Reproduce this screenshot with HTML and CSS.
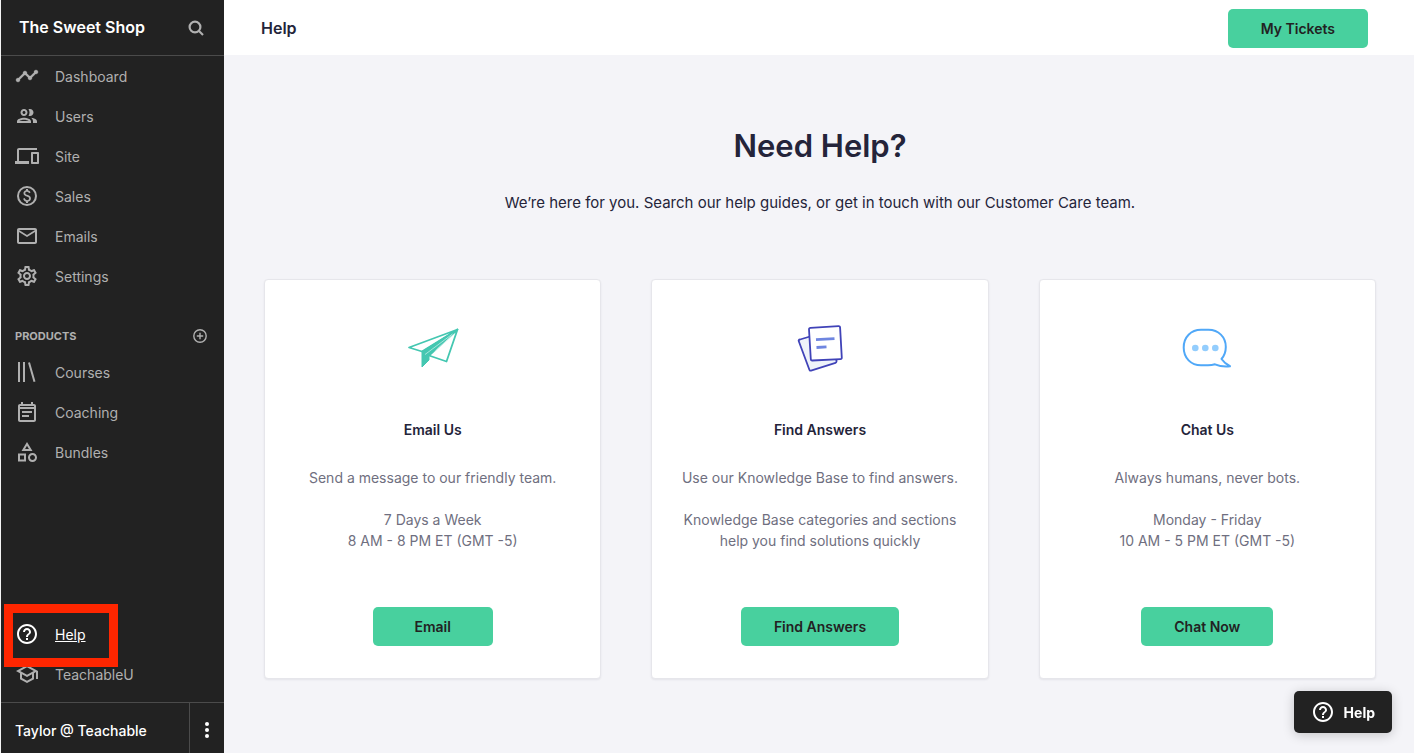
FILE: index.html
```html
<!DOCTYPE html>
<html lang="en">
<head>
<meta charset="utf-8">
<title>Help - The Sweet Shop</title>
<link rel="stylesheet" href="styles.css">
</head>
<body>
<div class="app">
  <aside class="sidebar">
    <header class="brand">
      <span class="brand-name">The Sweet Shop</span>
      <button class="icon-button search" type="button" aria-label="Search">
        <svg viewBox="0 0 20 20" width="20" height="20" fill="none" stroke="currentColor" stroke-width="2.200"><circle cx="9" cy="9" r="5.400"/><path d="M13 13l4 4"/></svg>
      </button>
    </header>
    <nav class="nav" aria-label="School">
      <a class="nav-item" href="#"><svg class="icon" viewBox="0 0 24 24"><path d="M23 8c0 1.100-.9 2-2 2-.18 0-.35-.02-.51-.07l-3.560 3.550c.05.16.07.34.07.52 0 1.100-.9 2-2 2s-2-.9-2-2c0-.18.02-.36.07-.52l-2.550-2.550c-.16.05-.34.07-.52.07s-.36-.02-.52-.07l-4.550 4.560c.05.16.07.33.07.51 0 1.100-.9 2-2 2s-2-.9-2-2 .9-2 2-2c.18 0 .35.02.51.07l4.560-4.550C8.020 9.360 8 9.180 8 9c0-1.100.9-2 2-2s2 .9 2 2c0 .18-.02.36-.07.52l2.550 2.550c.16-.05.34-.07.52-.07s.36.02.52.07l3.550-3.560C19.020 8.350 19 8.180 19 8c0-1.100.9-2 2-2s2 .9 2 2z" stroke="currentColor" stroke-width=".3"/></svg><span>Dashboard</span></a>
      <a class="nav-item" href="#"><svg class="icon" viewBox="0 0 24 24"><path d="M9 13.750c-2.340 0-7 1.170-7 3.500V19h14v-1.750c0-2.330-4.660-3.500-7-3.500zM4.340 17c.84-.58 2.870-1.250 4.660-1.250s3.820.67 4.660 1.250H4.340zM9 12c1.930 0 3.500-1.570 3.500-3.500S10.930 5 9 5 5.500 6.570 5.500 8.500 7.070 12 9 12zm0-5c.83 0 1.500.67 1.500 1.500S9.830 10 9 10s-1.500-.67-1.500-1.500S8.170 7 9 7zm7.040 6.810c1.160.84 1.960 1.960 1.960 3.440V19h4v-1.750c0-2.020-3.500-3.170-5.960-3.440zM15 12c1.930 0 3.500-1.570 3.500-3.500S16.930 5 15 5c-.54 0-1.040.13-1.500.35.63.89 1 1.980 1 3.150s-.37 2.260-1 3.150c.46.22.96.35 1.500.35z"/></svg><span>Users</span></a>
      <a class="nav-item" href="#"><svg class="icon" viewBox="0 0 24 24"><path d="M4 6h18V4H4c-1.100 0-2 .9-2 2v11H0v3h14v-3H4V6zm19 2h-6c-.55 0-1 .45-1 1v10c0 .55.45 1 1 1h6c.55 0 1-.45 1-1V9c0-.55-.45-1-1-1zm-1 10h-4v-8h4v8z"/></svg><span>Site</span></a>
      <a class="nav-item" href="#"><svg class="icon" viewBox="0 0 24 24"><circle cx="12" cy="12" r="9" fill="none" stroke="currentColor" stroke-width="2"/><path d="M12.890 11.100c-1.780-.59-2.640-.96-2.640-1.900 0-1.020 1.110-1.390 1.810-1.390 1.310 0 1.790.99 1.900 1.340l1.580-.67c-.15-.45-.82-1.920-2.540-2.240V5h-2v1.260c-2.480.56-2.490 2.860-2.490 2.960 0 2.270 2.250 2.910 3.350 3.310 1.580.56 2.280 1.070 2.280 2.030 0 1.130-1.050 1.610-1.980 1.610-1.820 0-2.340-1.870-2.400-2.090l-1.660.67c.63 2.190 2.280 2.780 2.900 2.960V19h2v-1.240c.4-.09 2.900-.59 2.900-3.220 0-1.390-.61-2.610-3.010-3.440z"/></svg><span>Sales</span></a>
      <a class="nav-item" href="#"><svg class="icon" viewBox="0 0 24 24"><path d="M20 4H4c-1.100 0-2 .9-2 2v12c0 1.100.9 2 2 2h16c1.100 0 2-.9 2-2V6c0-1.100-.9-2-2-2zm0 14H4V8l8 5 8-5v10zm-8-7L4 6h16l-8 5z"/></svg><span>Emails</span></a>
      <a class="nav-item" href="#"><svg class="icon" viewBox="0 0 24 24"><path d="M19.430 12.980c.04-.32.07-.64.07-.98 0-.34-.03-.66-.07-.98l2.110-1.650c.19-.15.24-.42.12-.64l-2-3.460c-.09-.16-.26-.25-.44-.25-.06 0-.12.01-.17.03l-2.490 1c-.52-.4-1.080-.73-1.690-.98l-.38-2.650C14.460 2.180 14.250 2 14 2h-4c-.25 0-.46.18-.49.42l-.38 2.650c-.61.25-1.170.59-1.690.98l-2.490-1c-.06-.02-.12-.03-.18-.03-.17 0-.34.09-.43.25l-2 3.460c-.13.22-.07.49.12.64l2.110 1.650c-.04.32-.07.65-.07.98 0 .33.03.66.07.98l-2.110 1.650c-.19.15-.24.42-.12.64l2 3.460c.09.16.26.25.44.25.06 0 .12-.01.17-.03l2.490-1c.52.4 1.080.73 1.690.98l.38 2.650c.03.24.24.42.49.42h4c.25 0 .46-.18.49-.42l.38-2.650c.61-.25 1.170-.59 1.690-.98l2.490 1c.06.02.12.03.18.03.17 0 .34-.09.43-.25l2-3.460c.12-.22.07-.49-.12-.64l-2.110-1.650zm-1.980-1.710c.04.31.05.52.05.73 0 .21-.02.43-.05.73l-.14 1.130.89.7 1.080.84-.7 1.210-1.270-.51-1.040-.42-.9.68c-.43.32-.84.56-1.250.73l-1.060.43-.16 1.130-.2 1.350h-1.400l-.19-1.350-.16-1.130-1.060-.43c-.43-.18-.83-.41-1.230-.71l-.91-.7-1.060.43-1.270.51-.7-1.210 1.080-.84.89-.7-.14-1.130c-.03-.31-.05-.54-.05-.74s.02-.43.05-.73l.14-1.130-.89-.7-1.080-.84.7-1.210 1.270.51 1.040.42.9-.68c.43-.32.84-.56 1.250-.73l1.060-.43.16-1.130.2-1.350h1.390l.19 1.350.16 1.130 1.060.43c.43.18.83.41 1.230.71l.91.7 1.060-.43 1.270-.51.7 1.210-1.070.85-.89.7.14 1.130zM12 8c-2.210 0-4 1.790-4 4s1.790 4 4 4 4-1.790 4-4-1.790-4-4-4zm0 6c-1.100 0-2-.9-2-2s.9-2 2-2 2 .9 2 2-.9 2-2 2z"/></svg><span>Settings</span></a>
    </nav>
    <div class="section-head">
      <h2 class="section-title">PRODUCTS</h2>
      <button class="icon-button" type="button" aria-label="Add product">
        <svg viewBox="0 0 16 16" width="16" height="16" fill="none" stroke="currentColor" stroke-width="1.400"><circle cx="8" cy="8" r="6.200"/><path d="M8 4.800v6.400M4.800 8h6.400"/></svg>
      </button>
    </div>
    <nav class="nav" aria-label="Products">
      <a class="nav-item" href="#"><svg class="icon" viewBox="0 0 24 24" fill="none" stroke="currentColor" stroke-width="2"><path d="M4 2v20M9 2v20M14 2.500l5.500 19.200"/></svg><span>Courses</span></a>
      <a class="nav-item" href="#"><svg class="icon" viewBox="0 0 24 24"><path d="M19 4h-1V2h-2v2H8V2H6v2H5c-1.110 0-2 .9-2 2v14c0 1.100.89 2 2 2h14c1.100 0 2-.9 2-2V6c0-1.100-.9-2-2-2zm0 16H5V9h14v11zm0-13H5V6h14v1zM7 11h10v2H7zM7 15h7v2H7z"/></svg><span>Coaching</span></a>
      <a class="nav-item" href="#"><svg class="icon" viewBox="0 0 24 24"><path d="M12 2l-5.500 9h11L12 2zm0 3.840L13.930 9h-3.870L12 5.840zM17.500 13c-2.490 0-4.500 2.010-4.500 4.500s2.010 4.500 4.500 4.500 4.500-2.010 4.500-4.500-2.010-4.500-4.500-4.500zm0 7c-1.380 0-2.500-1.120-2.500-2.500s1.120-2.500 2.500-2.500 2.500 1.120 2.500 2.500-1.120 2.500-2.500 2.500zM3 21.500h8v-8H3v8zm2-6h4v4H5v-4z"/></svg><span>Bundles</span></a>
    </nav>
    <nav class="nav nav-bottom" aria-label="Support">
      <a class="nav-item nav-item-active" href="#" aria-current="page"><svg class="icon" viewBox="0 0 24 24"><path d="M11 18h2v-2h-2v2zm1-16C6.480 2 2 6.480 2 12s4.480 10 10 10 10-4.480 10-10S17.520 2 12 2zm0 18c-4.410 0-8-3.590-8-8s3.590-8 8-8 8 3.590 8 8-3.590 8-8 8zm0-14c-2.210 0-4 1.790-4 4h2c0-1.100.9-2 2-2s2 .9 2 2c0 2-3 1.750-3 5h2c0-2.250 3-2.500 3-5 0-2.210-1.790-4-4-4z"/></svg><span>Help</span></a>
      <a class="nav-item" href="#"><svg class="icon" viewBox="0 0 24 24"><path d="M12 3L1 9l4 2.180v6L12 21l7-3.820v-6l2-1.090V17h2V9L12 3zm6.820 6L12 12.720 5.180 9 12 5.280 18.820 9zM17 15.990l-5 2.730-5-2.730v-3.720L12 15l5-2.730v3.720z"/></svg><span>TeachableU</span></a>
    </nav>
    <footer class="account">
      <span class="account-name">Taylor @ Teachable</span>
      <button class="account-menu" type="button" aria-label="Account menu">
        <svg viewBox="0 0 24 24" width="24" height="24" fill="currentColor"><circle cx="12" cy="6" r="2"/><circle cx="12" cy="12" r="2"/><circle cx="12" cy="18" r="2"/></svg>
      </button>
    </footer>
  </aside>

  <div class="page">
    <header class="topbar">
      <h1 class="topbar-title">Help</h1>
      <button class="button" type="button">My Tickets</button>
    </header>
    <main class="content">
      <h2 class="headline">Need Help?</h2>
      <p class="lead">We’re here for you. Search our help guides, or get in touch with our Customer Care team.</p>
      <div class="cards">
        <section class="card">
          <svg class="art" viewBox="0 0 64 64" fill="none" stroke="#44c7b1" stroke-width="1.800" stroke-linejoin="round">
            <path d="M56.500 13.500L8 31.500l13 4z"/>
            <path d="M56.500 13.500L28 39.500l17.500 6z"/>
            <path d="M53.500 17.500L33 36.500l9-12z" fill="#d5f3ee" stroke="none"/>
            <path d="M56.500 13.500L21 35.500V51l7-7v-4.500z" fill="#44c7b1" stroke-width="1"/>
            <path d="M51.500 18L24 38.500" stroke="#a7e6dc" stroke-width="1"/>
          </svg>
          <h3 class="card-title">Email Us</h3>
          <p class="card-text">Send a message to our friendly team.</p>
          <p class="card-text">7 Days a Week<br>8 AM - 8 PM ET (GMT -5)</p>
          <button class="button" type="button">Email</button>
        </section>
        <section class="card">
          <svg class="art" viewBox="0 0 64 64" stroke="#4043b8" stroke-width="1.800" stroke-linejoin="round">
            <path d="M12 23.500L22 20.500 48.500 44v1.500q0 1-1 1.300L23 54.600q-1.200.4-1.600-.8L10.700 25q-.4-1.100 1.300-1.500z" fill="#eef3fa"/>
            <path d="M22.500 11.900l28-1.700q1.500-.1 1.600 1.400l1.700 30q.1 1.500-1.400 1.600L24.400 44.500q-1.500.1-1.600-1.400L21 13.500q-.1-1.500 1.500-1.600z" fill="#fff"/>
            <path d="M28 23.700l18.500-1.100M28.500 31.500l10-.6" stroke="#6f86e0" stroke-width="2.800"/>
          </svg>
          <h3 class="card-title">Find Answers</h3>
          <p class="card-text">Use our Knowledge Base to find answers.</p>
          <p class="card-text">Knowledge Base categories and sections<br>help you find solutions quickly</p>
          <button class="button" type="button">Find Answers</button>
        </section>
        <section class="card">
          <svg class="art" viewBox="0 0 64 64" fill="none" stroke="#50a8f8" stroke-width="2" stroke-linejoin="round">
            <path d="M26 13.800h7.500C43.500 13.800 50.800 21 50.800 31c0 5-1.300 8.500-4.300 12 2.500 3.500 5 5.500 8.500 7.200-5.500.6-10.500 0-15-1.900-2.500.8-4.500 1-7 1h-7C16 49.300 8.700 42 8.700 31.500S16 13.800 26 13.800z"/>
            <g fill="#93cdfd" stroke="none"><circle cx="20.300" cy="32" r="3.300"/><circle cx="30.300" cy="32" r="3.300"/><circle cx="40.300" cy="32" r="3.300"/></g>
          </svg>
          <h3 class="card-title">Chat Us</h3>
          <p class="card-text">Always humans, never bots.</p>
          <p class="card-text">Monday - Friday<br>10 AM - 5 PM ET (GMT -5)</p>
          <button class="button" type="button">Chat Now</button>
        </section>
      </div>
    </main>
  </div>
</div>
<button class="help-widget" type="button">
  <svg class="icon" viewBox="0 0 24 24"><path d="M11 18h2v-2h-2v2zm1-16C6.480 2 2 6.480 2 12s4.480 10 10 10 10-4.480 10-10S17.520 2 12 2zm0 18c-4.410 0-8-3.590-8-8s3.590-8 8-8 8 3.590 8 8-3.590 8-8 8zm0-14c-2.210 0-4 1.790-4 4h2c0-1.100.9-2 2-2s2 .9 2 2c0 2-3 1.750-3 5h2c0-2.250 3-2.500 3-5 0-2.210-1.790-4-4-4z"/></svg>
  Help
</button>
</body>
</html>
```
FILE: styles.css
```css
*,
*::after {
  box-sizing: border-box;
}

body,
h1,
h2,
h3,
p {
  margin: 0;
}

body {
  font-family: Inter, "Liberation Sans", sans-serif;
  font-size: 14px;
  line-height: 21px;
  color: #24243a;
  background: #f4f4f8;
}

button {
  font: inherit;
  border: 0;
  cursor: pointer;
}

.app {
  display: flex;
  min-height: 100vh;
}

/* Sidebar */

.sidebar {
  display: flex;
  flex-direction: column;
  flex: 0 0 224px;
  color: #b0b0b0;
  background: #222222;
  border-left: 1px solid #f4f4f4;
}

.brand {
  display: flex;
  align-items: center;
  justify-content: space-between;
  height: 56px;
  padding: 0 18px;
  border-bottom: 1px solid #4b4b4b;
}

.brand-name {
  font-size: 16px;
  font-weight: 600;
  color: #ffffff;
}

.icon-button {
  display: flex;
  padding: 0;
  color: inherit;
  background: none;
}

.nav-item {
  display: flex;
  align-items: center;
  gap: 16px;
  height: 40px;
  padding: 0 14px;
  color: inherit;
  text-decoration: none;
}

.icon {
  flex: none;
  width: 24px;
  height: 24px;
}

.icon:not([fill]) {
  fill: currentColor;
}

.section-head {
  display: flex;
  align-items: center;
  justify-content: space-between;
  height: 32px;
  margin-top: 24px;
  padding: 0 16px 0 14px;
}

.section-title {
  font-size: 11px;
  font-weight: 700;
}

.nav-bottom {
  margin-top: auto;
  margin-bottom: 8px;
}

.nav-item-active {
  position: relative;
  color: #ffffff;
  text-decoration: underline;
}

.nav-item-active::after {
  content: "";
  position: absolute;
  z-index: 1;
  top: -10px;
  left: 3px;
  width: 114px;
  height: 63px;
  border: 9px solid #ff2600;
}

.account {
  display: flex;
  align-items: stretch;
  justify-content: space-between;
  height: 51px;
  border-top: 1px solid #4b4b4b;
}

.account-name {
  padding: 17px 14px;
  font-weight: 500;
  color: #ffffff;
}

.account-menu {
  display: flex;
  align-items: center;
  justify-content: center;
  width: 35px;
  padding: 4px 0 0;
  color: #ffffff;
  background: none;
  border-left: 1px solid #4b4b4b;
}

/* Page */

.page {
  flex: 1;
  min-width: 0;
}

.topbar {
  display: flex;
  align-items: center;
  justify-content: space-between;
  height: 55px;
  padding: 1px 46px 0 37px;
  background: #ffffff;
}

.topbar-title {
  font-size: 16px;
  font-weight: 600;
}

.button {
  min-width: 120px;
  height: 39px;
  padding: 0 33px;
  font-weight: 600;
  color: #222222;
  background: #48d09e;
  border-radius: 5px;
}

.content {
  padding: 70px 38px 74px 40px;
  text-align: center;
}

.headline {
  font-size: 31px;
  font-weight: 600;
  line-height: 42px;
}

.lead {
  margin-top: 24px;
  font-size: 15px;
  line-height: 24px;
}

.cards {
  display: grid;
  grid-template-columns: repeat(3, 1fr);
  gap: 50px;
  margin-top: 64px;
}

.card {
  display: flex;
  flex-direction: column;
  align-items: center;
  min-height: 400px;
  padding: 36px 24px 32px;
  background: #ffffff;
  border: 1px solid #e6e6eb;
  border-radius: 4px;
  box-shadow: 0 1px 2px rgba(36, 36, 58, 0.08);
}

.art {
  width: 64px;
  height: 64px;
  margin-bottom: 38px;
}

.card-title {
  margin-bottom: 4px;
  font-size: 14px;
  font-weight: 600;
  line-height: 24px;
}

.card-text {
  margin-top: 21px;
  color: #6f6f80;
}

.card .button {
  margin-top: auto;
}

.help-widget {
  position: fixed;
  right: 22px;
  bottom: 20px;
  display: flex;
  align-items: center;
  gap: 9px;
  height: 42px;
  padding: 0 17px;
  font-weight: 700;
  color: #ffffff;
  background: #222222;
  border-radius: 5px;
  box-shadow: 0 2px 12px rgba(0, 0, 0, 0.2);
}
```
